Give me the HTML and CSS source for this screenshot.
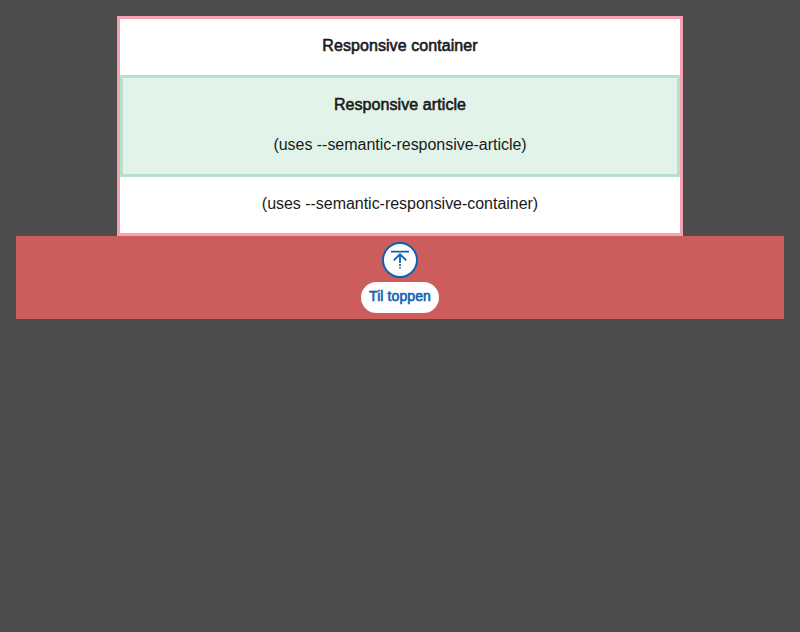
FILE: index.html
```html
<!DOCTYPE html>
<html lang="no">
<head>
<meta charset="utf-8">
<title>Responsive layout</title>
<link rel="stylesheet" href="styles.css">
</head>
<body>
<main class="container">
  <p class="label strong">Responsive container</p>
  <article class="article">
    <p class="label strong">Responsive article</p>
    <p class="label">(uses --semantic-responsive-article)</p>
  </article>
  <p class="label">(uses --semantic-responsive-container)</p>
</main>
<footer class="footer">
  <a class="top-link" href="#">
    <span class="circle">
      <svg class="icon" width="24" height="24" viewBox="0 0 24 24" fill="none" stroke="currentColor" stroke-width="1.8">
        <path d="M3 3.7H21M12 6V15M5.7 12.4L12 6.3L18.3 12.4M12 16V18M12 19.3V20.6"/>
      </svg>
    </span>
    <span class="text">Til toppen</span>
  </a>
</footer>
</body>
</html>
```

FILE: styles.css
```css
* { box-sizing: border-box; }
body {
  margin: 0;
  padding: 16px;
  background: #4d4d4d;
  color: #1a1a1a;
  font-family: "Liberation Sans", Arial, sans-serif;
  font-size: 16px;
  line-height: 24px;
}
.container {
  width: 566px;
  margin: 0 auto;
  border: 3px solid #f5a3b3;
  background: #fff;
  text-align: center;
}
.label { margin: 0; padding: 15px 0 17px; letter-spacing: -0.03px; }
.strong { letter-spacing: 0.08px; -webkit-text-stroke: 0.6px currentColor; }
.article {
  border: 3px solid #b7e1c8;
  background: #e2f4e9;
}
.article .strong { padding-bottom: 16px; }
.article .label + .label { padding-top: 0; }
.footer {
  display: flex;
  justify-content: center;
  height: 83px;
  padding-top: 6px;
  background: #cd5c5c;
}
.top-link {
  display: flex;
  flex-direction: column;
  align-items: center;
  gap: 4px;
  color: #1062b0;
  text-decoration: none;
}
.circle {
  display: flex;
  align-items: center;
  justify-content: center;
  width: 36px;
  height: 36px;
  border: 2px solid currentColor;
  border-radius: 50%;
  background: #fff;
}
.text {
  width: 78px;
  height: 31px;
  padding-top: 2px;
  border-radius: 16px;
  background: #fff;
  font-size: 14px;
  letter-spacing: 0.1px;
  text-align: center;
  -webkit-text-stroke: 0.6px currentColor;
}
```
